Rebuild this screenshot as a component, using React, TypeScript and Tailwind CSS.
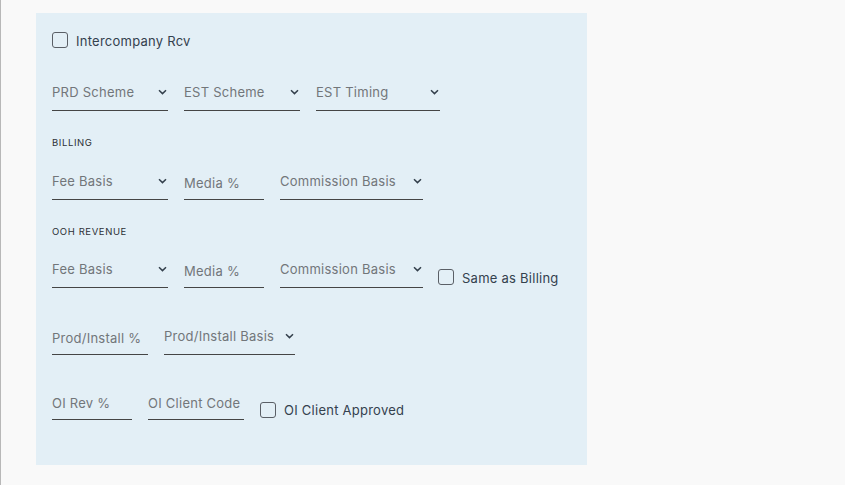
import React from "react";

function Chevron() {
  return (
    <svg width="9" height="6" viewBox="0 0 9 6" className="shrink-0 text-[#34404c]">
      <path d="M1 1.2 L4.5 4.6 L8 1.2" fill="none" stroke="currentColor" strokeWidth="1.5" />
    </svg>
  );
}

function SelectField({ label, width }: { label: string; width: string }) {
  return (
    <div className={`${width} h-[32px] border-b border-[#454545] flex items-start justify-between pt-[4px] pr-[1px]`}>
      <span className="text-[13px] leading-[18px] text-[#72767a] tracking-[0.25px]">{label}</span>
      <span className="pt-[6px]">
        <Chevron />
      </span>
    </div>
  );
}

function InputField({ label, width }: { label: string; width: string }) {
  return (
    <div className={`${width} h-[32px] border-b border-[#454545] flex items-start pt-[6px]`}>
      <span className="text-[13px] leading-[18px] text-[#72767a] tracking-[0.25px]">{label}</span>
    </div>
  );
}

function Check({ label }: { label: string }) {
  return (
    <label className="flex items-center gap-2">
      <span className="w-[16px] h-[16px] rounded-[3px] border-[1.5px] border-[#5a5f66] bg-transparent" />
      <span className="text-[13px] leading-[18px] text-[#34414e] tracking-[0.25px] pt-[1px]">{label}</span>
    </label>
  );
}

function SectionLabel({ text }: { text: string }) {
  return <div className="text-[9.5px] leading-[12px] tracking-[0.6px] text-[#2d3136] uppercase">{text}</div>;
}

export default function App() {
  return (
    <div className="min-h-[485px] w-full bg-[#f9f9f9] border-l border-[#b8b8b8] pt-[13px] pl-[35px]" style={{ fontFamily: "Inter, 'Liberation Sans', sans-serif" }}>
      <div className="w-[551px] h-[452px] bg-[#e3eff6] px-[16px] pt-[19px] flex flex-col">
        <div className="h-[16px] flex items-center">
          <Check label="Intercompany Rcv" />
        </div>

        <div className="mt-[31px] flex gap-4">
          <SelectField label="PRD Scheme" width="w-[116px]" />
          <SelectField label="EST Scheme" width="w-[116px]" />
          <SelectField label="EST Timing" width="w-[124px]" />
        </div>

        <div className="mt-[26px]">
          <SectionLabel text="Billing" />
        </div>
        <div className="mt-[19px] flex gap-4">
          <SelectField label="Fee Basis" width="w-[116px]" />
          <InputField label="Media %" width="w-[80px]" />
          <SelectField label="Commission Basis" width="w-[143px]" />
        </div>

        <div className="mt-[26px]">
          <SectionLabel text="OOH Revenue" />
        </div>
        <div className="mt-[18px] flex gap-4 items-end">
          <SelectField label="Fee Basis" width="w-[116px]" />
          <InputField label="Media %" width="w-[80px]" />
          <SelectField label="Commission Basis" width="w-[143px]" />
          <div className="-ml-[1px] self-center pt-[10px]">
            <Check label="Same as Billing" />
          </div>
        </div>

        <div className="mt-[35px] flex gap-4">
          <InputField label="Prod/Install %" width="w-[96px]" />
          <SelectField label="Prod/Install Basis" width="w-[131px]" />
        </div>

        <div className="mt-[33px] flex gap-4">
          <InputField label="OI Rev %" width="w-[80px]" />
          <InputField label="OI Client Code" width="w-[96px]" />
          <div className="self-center pt-[11px]">
            <Check label="OI Client Approved" />
          </div>
        </div>
      </div>
    </div>
  );
}
